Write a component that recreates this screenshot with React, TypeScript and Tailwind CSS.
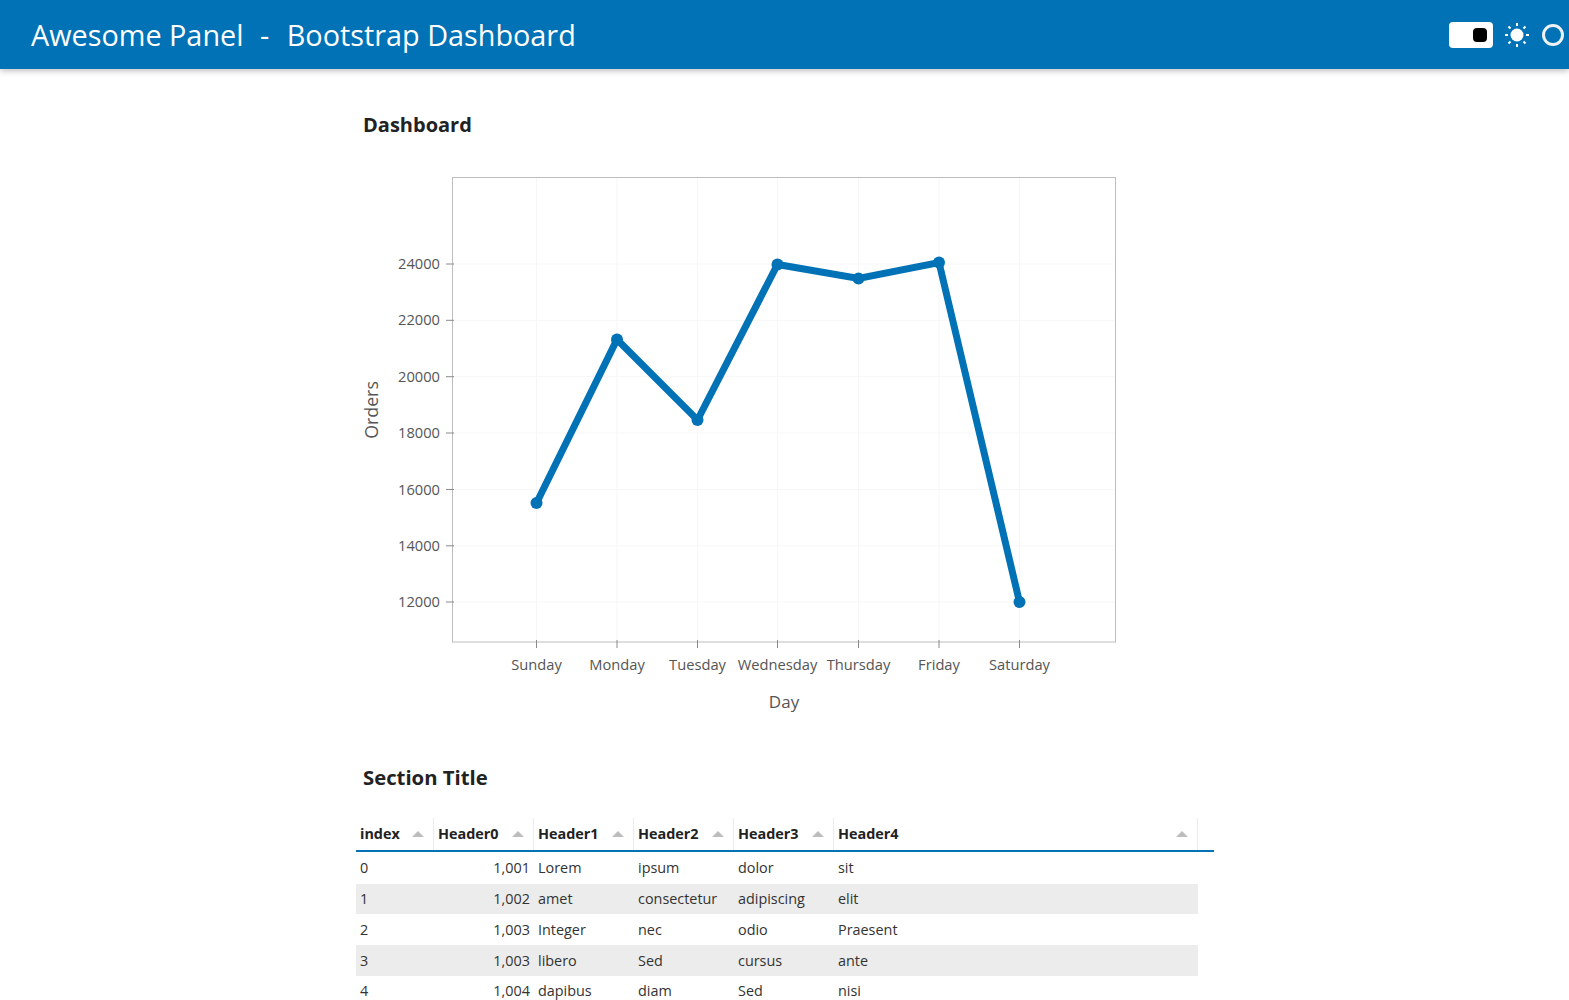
const font = { fontFamily: '"Open Sans", "Noto Sans", sans-serif' };

const points: [number, number][] = [
  [536.5, 502.5],
  [617, 339],
  [697.5, 419.5],
  [777.5, 264],
  [858.5, 278],
  [939, 262],
  [1019.5, 601.5],
];
const xLabels = ["Sunday", "Monday", "Tuesday", "Wednesday", "Thursday", "Friday", "Saturday"];
const xGrid = [536.5, 617, 697.5, 777.5, 858.5, 939, 1019.5];
const yTicks: [string, number][] = [
  ["24000", 264],
  ["22000", 320.3],
  ["20000", 376.7],
  ["18000", 433],
  ["16000", 489.5],
  ["14000", 545.8],
  ["12000", 602],
];

function Chart() {
  const ox = 356;
  const oy = 170;
  return (
    <svg width="780" height="560" viewBox={`${ox} ${oy} 780 560`} className="block" style={{ fontFamily: '"Open Sans", sans-serif' }}>
      <rect x="452.5" y="177.5" width="663" height="464.5" fill="#fff" stroke="#bdbdbd" strokeWidth="1" />
      {xGrid.map((x) => (
        <line key={x} x1={x} x2={x} y1="178" y2="641" stroke="#f6f6f6" />
      ))}
      {yTicks.map(([, y]) => (
        <line key={y} x1="453" x2="1114" y1={y} y2={y} stroke="#f7f7f7" />
      ))}
      {yTicks.map(([t, y]) => (
        <g key={t}>
          <line x1="446" x2="454" y1={y} y2={y} stroke="#8a8a8a" />
          <text x="440" y={y + 5} textAnchor="end" fontSize="14.7" fill="#555">{t}</text>
        </g>
      ))}
      {xGrid.map((x, i) => (
        <g key={x}>
          <line x1={x} x2={x} y1="640" y2="648" stroke="#8a8a8a" />
          <text x={x} y="669.500" textAnchor="middle" fontSize="14.7" fill="#555">{xLabels[i]}</text>
        </g>
      ))}
      <text x="784" y="707.500" textAnchor="middle" fontSize="17" fill="#555">Day</text>
      <text transform="translate(378 410) rotate(-90)" textAnchor="middle" fontSize="17.8" fill="#555">Orders</text>
      <polyline points={points.map((p) => p.join(",")).join(" ")} transform="translate(0 0.5)" fill="none" stroke="#0072b5" strokeWidth="7" strokeLinejoin="miter" />
      {points.map(([x, y]) => (
        <circle key={x} cx={x} cy={y + 0.5} r="6" fill="#0072b5" />
      ))}
    </svg>
  );
}

const headers = [
  { t: "index", w: "w-[78px]" },
  { t: "Header0", w: "w-[100px]" },
  { t: "Header1", w: "w-[100px]" },
  { t: "Header2", w: "w-[100px]" },
  { t: "Header3", w: "w-[100px]" },
  { t: "Header4", w: "w-[364px]" },
];
const rows = [
  ["0", "1,001", "Lorem", "ipsum", "dolor", "sit"],
  ["1", "1,002", "amet", "consectetur", "adipiscing", "elit"],
  ["2", "1,003", "Integer", "nec", "odio", "Praesent"],
  ["3", "1,003", "libero", "Sed", "cursus", "ante"],
  ["4", "1,004", "dapibus", "diam", "Sed", "nisi"],
];
const widths = ["w-[78px]", "w-[100px]", "w-[100px]", "w-[100px]", "w-[100px]", "w-[364px]"];
const rowClasses = ["h-[32px]", "h-[30px]", "h-[31px]", "h-[31px]", "h-[31px] pb-[2px]"];

function Table() {
  return (
    <div className="w-[858px] text-[14.4px] text-[#333]">
      <div className="flex h-[34px] border-b-2 border-[#0072b5]">
        {headers.map((h) => (
          <div key={h.t} className={`${h.w} flex items-center justify-between border-r border-[#ececec] pl-1 pr-[9px] font-bold text-[#222]`}>
            <span>{h.t}</span>
            <span className="h-0 w-0 border-x-[6px] border-b-[6px] border-x-transparent border-b-[#bdbdbd]" />
          </div>
        ))}
      </div>
      {rows.map((r, i) => (
        <div key={r[0]} className={`flex ${rowClasses[i]} w-[842px] items-center ${i % 2 ? "bg-[#ececec]" : "bg-white"}`}>
          {r.map((c, j) => (
            <div key={j} className={`${widths[j]} whitespace-nowrap px-1 ${j === 1 ? "text-right" : ""}`}>{c}</div>
          ))}
        </div>
      ))}
    </div>
  );
}

function Sun() {
  return (
    <svg width="26" height="26" viewBox="0 0 26 26" fill="none" stroke="#fff" strokeWidth="2" className="block">
      <circle cx="13" cy="13" r="6.500" fill="#fff" stroke="none" />
      <path d="M13 1v3M13 22v3M1 13h3M22 13h3M4.500 4.500l2 2M19.500 19.500l2 2M4.500 21.500l2-2M19.500 6.500l2-2" />
    </svg>
  );
}

export default function App() {
  return (
    <div className="h-[1000px] overflow-hidden bg-white" style={font}>
      <header className="relative z-10 flex h-[69px] items-center justify-between bg-[#0072b5] pl-[31px] pr-[5px] shadow-[0_2px_6px_rgba(0,0,0,0.25)]">
        <h1 className="flex whitespace-pre text-[28.8px] font-normal text-white">
          <span>Awesome Panel</span>
          <span className="ml-[16.500px]">-</span>
          <span className="ml-[17.500px]">Bootstrap Dashboard</span>
        </h1>
        <div className="flex items-center">
          <div className="flex h-[26px] w-[44px] items-center justify-end rounded-[4px] bg-white pr-[6px]">
            <div className="h-[14px] w-[14px] rounded-[4px] bg-black" />
          </div>
          <div className="ml-[11px]"><Sun /></div>
          <div className="ml-[12px] h-[22px] w-[22px] rounded-full border-[3px] border-[#eef2f5]" />
        </div>
      </header>
      <main className="ml-[356px] flex flex-col">
        <h2 className="ml-[7px] mt-[41px] text-[20px] leading-[30px] font-bold text-[#222]">Dashboard</h2>
        <div className="mt-[30px]"><Chart /></div>
        <h2 className="ml-[7px] mt-[32px] text-[20.300px] leading-[30px] font-bold text-[#222]">Section Title</h2>
        <div className="mt-[26px]"><Table /></div>
      </main>
    </div>
  );
}
